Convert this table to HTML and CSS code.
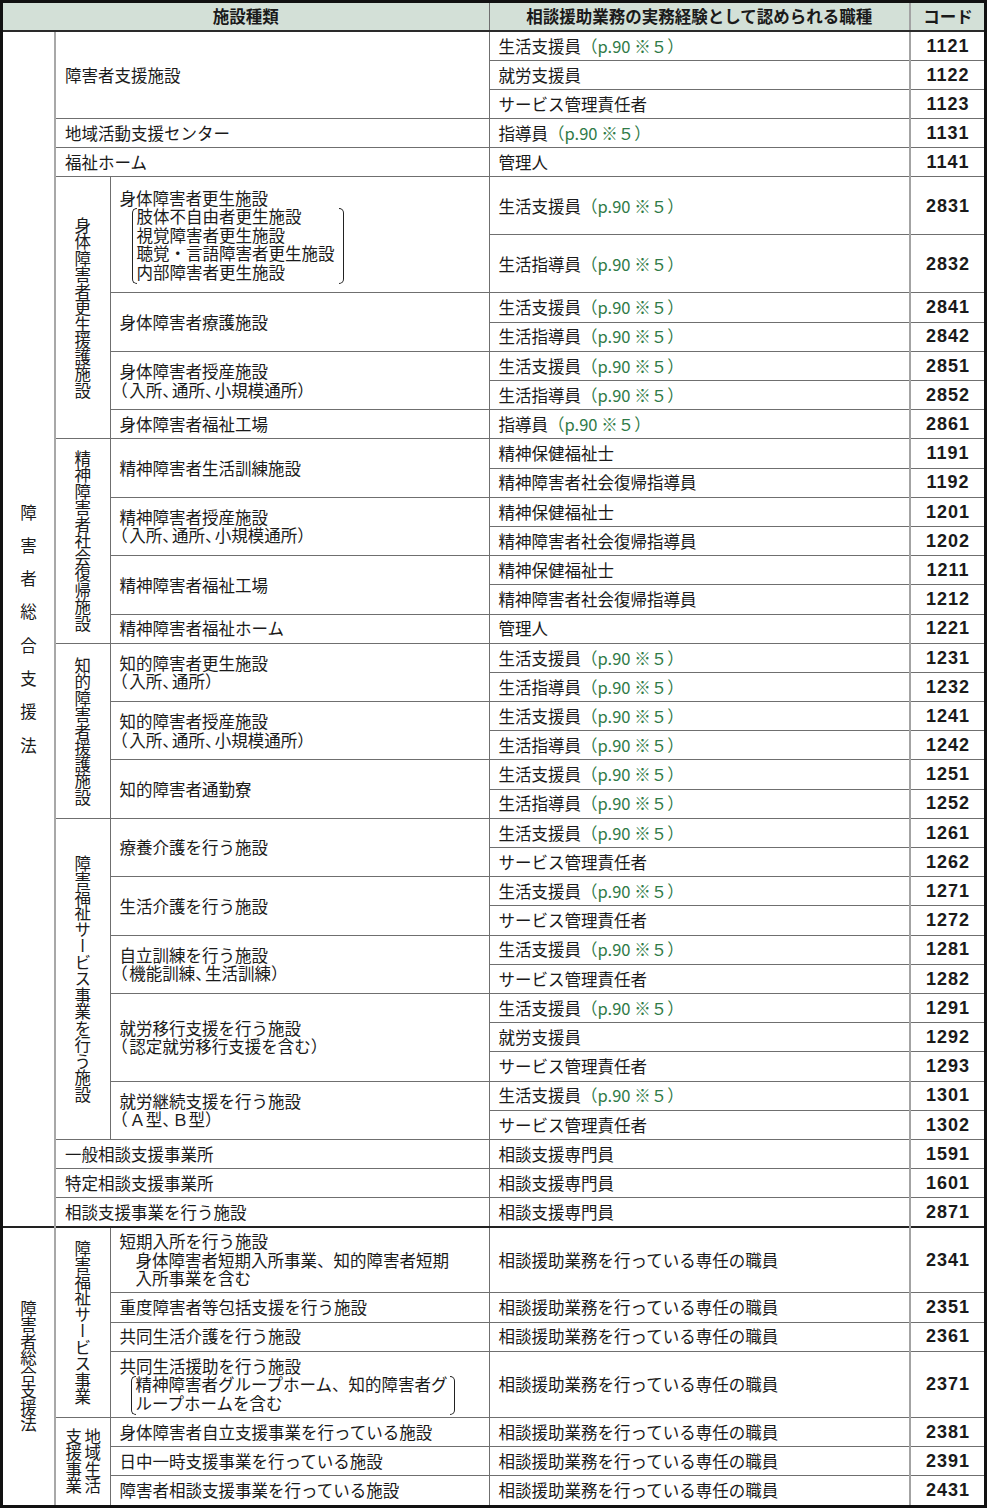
FILE: index.html
```html
<!DOCTYPE html>
<html lang="ja">
<head>
<meta charset="utf-8">
<title>相談援助業務の実務経験</title>
<link rel="stylesheet" href="styles.css">
</head>
<body>
<div class="frame">
<table>
<colgroup>
<col class="c1"><col class="c2"><col class="c3"><col class="c4"><col class="c5">
</colgroup>
<thead>
<tr class="head"><th colspan="3">施設種類</th><th>相談援助業務の実務経験として認められる職種</th><th class="code">コード</th></tr>
</thead>
<tbody>
<tr>
<td class="law" rowspan="39"><div class="vt spaced">障害者総合支援法</div></td>
<td class="fac" colspan="2" rowspan="3">障害者支援施設</td>
<td class="job">生活支援員<span class="note">（p.90 ※５）</span></td><td class="code">1121</td></tr>
<tr><td class="job">就労支援員</td><td class="code">1122</td></tr>
<tr><td class="job">サービス管理責任者</td><td class="code">1123</td></tr>
<tr><td class="fac" colspan="2">地域活動支援センター</td><td class="job">指導員<span class="note">（p.90 ※５）</span></td><td class="code">1131</td></tr>
<tr><td class="fac" colspan="2">福祉ホーム</td><td class="job">管理人</td><td class="code">1141</td></tr>

<tr class="t2">
<td class="grp" rowspan="7"><div class="vt">身体障害者更生援護施設</div></td>
<td class="fac" rowspan="2">身体障害者更生施設
<div class="sub"><div class="in">肢体不自由者更生施設<br>視覚障害者更生施設<br>聴覚・言語障害者更生施設<br>内部障害者更生施設</div></div></td>
<td class="job">生活支援員<span class="note">（p.90 ※５）</span></td><td class="code">2831</td></tr>
<tr class="t2"><td class="job">生活指導員<span class="note">（p.90 ※５）</span></td><td class="code">2832</td></tr>
<tr><td class="fac" rowspan="2">身体障害者療護施設</td><td class="job">生活支援員<span class="note">（p.90 ※５）</span></td><td class="code">2841</td></tr>
<tr><td class="job">生活指導員<span class="note">（p.90 ※５）</span></td><td class="code">2842</td></tr>
<tr><td class="fac" rowspan="2">身体障害者授産施設<br><span class="h">（</span>入所<span class="h">、</span>通所<span class="h">、</span>小規模通所<span class="h">）</span></td><td class="job">生活支援員<span class="note">（p.90 ※５）</span></td><td class="code">2851</td></tr>
<tr><td class="job">生活指導員<span class="note">（p.90 ※５）</span></td><td class="code">2852</td></tr>
<tr><td class="fac">身体障害者福祉工場</td><td class="job">指導員<span class="note">（p.90 ※５）</span></td><td class="code">2861</td></tr>

<tr>
<td class="grp" rowspan="7"><div class="vt">精神障害者社会復帰施設</div></td>
<td class="fac" rowspan="2">精神障害者生活訓練施設</td><td class="job">精神保健福祉士</td><td class="code">1191</td></tr>
<tr><td class="job">精神障害者社会復帰指導員</td><td class="code">1192</td></tr>
<tr><td class="fac" rowspan="2">精神障害者授産施設<br><span class="h">（</span>入所<span class="h">、</span>通所<span class="h">、</span>小規模通所<span class="h">）</span></td><td class="job">精神保健福祉士</td><td class="code">1201</td></tr>
<tr><td class="job">精神障害者社会復帰指導員</td><td class="code">1202</td></tr>
<tr><td class="fac" rowspan="2">精神障害者福祉工場</td><td class="job">精神保健福祉士</td><td class="code">1211</td></tr>
<tr><td class="job">精神障害者社会復帰指導員</td><td class="code">1212</td></tr>
<tr><td class="fac">精神障害者福祉ホーム</td><td class="job">管理人</td><td class="code">1221</td></tr>

<tr>
<td class="grp" rowspan="6"><div class="vt">知的障害者援護施設</div></td>
<td class="fac" rowspan="2">知的障害者更生施設<br><span class="h">（</span>入所<span class="h">、</span>通所<span class="h">）</span></td><td class="job">生活支援員<span class="note">（p.90 ※５）</span></td><td class="code">1231</td></tr>
<tr><td class="job">生活指導員<span class="note">（p.90 ※５）</span></td><td class="code">1232</td></tr>
<tr><td class="fac" rowspan="2">知的障害者授産施設<br><span class="h">（</span>入所<span class="h">、</span>通所<span class="h">、</span>小規模通所<span class="h">）</span></td><td class="job">生活支援員<span class="note">（p.90 ※５）</span></td><td class="code">1241</td></tr>
<tr><td class="job">生活指導員<span class="note">（p.90 ※５）</span></td><td class="code">1242</td></tr>
<tr><td class="fac" rowspan="2">知的障害者通勤寮</td><td class="job">生活支援員<span class="note">（p.90 ※５）</span></td><td class="code">1251</td></tr>
<tr><td class="job">生活指導員<span class="note">（p.90 ※５）</span></td><td class="code">1252</td></tr>

<tr>
<td class="grp" rowspan="11"><div class="vt">障害福祉サービス事業を行う施設</div></td>
<td class="fac" rowspan="2">療養介護を行う施設</td><td class="job">生活支援員<span class="note">（p.90 ※５）</span></td><td class="code">1261</td></tr>
<tr><td class="job">サービス管理責任者</td><td class="code">1262</td></tr>
<tr><td class="fac" rowspan="2">生活介護を行う施設</td><td class="job">生活支援員<span class="note">（p.90 ※５）</span></td><td class="code">1271</td></tr>
<tr><td class="job">サービス管理責任者</td><td class="code">1272</td></tr>
<tr><td class="fac" rowspan="2">自立訓練を行う施設<br><span class="h">（</span>機能訓練<span class="h">、</span>生活訓練<span class="h">）</span></td><td class="job">生活支援員<span class="note">（p.90 ※５）</span></td><td class="code">1281</td></tr>
<tr><td class="job">サービス管理責任者</td><td class="code">1282</td></tr>
<tr><td class="fac" rowspan="3">就労移行支援を行う施設<br><span class="h">（</span>認定就労移行支援を含む<span class="h">）</span></td><td class="job">生活支援員<span class="note">（p.90 ※５）</span></td><td class="code">1291</td></tr>
<tr><td class="job">就労支援員</td><td class="code">1292</td></tr>
<tr><td class="job">サービス管理責任者</td><td class="code">1293</td></tr>
<tr><td class="fac" rowspan="2">就労継続支援を行う施設<br><span class="h">（</span>Ａ型<span class="h">、</span>Ｂ型<span class="h">）</span></td><td class="job">生活支援員<span class="note">（p.90 ※５）</span></td><td class="code">1301</td></tr>
<tr><td class="job">サービス管理責任者</td><td class="code">1302</td></tr>
<tr><td class="fac" colspan="2">一般相談支援事業所</td><td class="job">相談支援専門員</td><td class="code">1591</td></tr>
<tr><td class="fac" colspan="2">特定相談支援事業所</td><td class="job">相談支援専門員</td><td class="code">1601</td></tr>
<tr><td class="fac" colspan="2">相談支援事業を行う施設</td><td class="job">相談支援専門員</td><td class="code">2871</td></tr>

<tr class="t3 sep">
<td class="law" rowspan="7"><div class="vt">障害者総合支援法</div></td>
<td class="grp" rowspan="4"><div class="vt">障害福祉サービス事業</div></td>
<td class="fac">短期入所を行う施設<div class="ind">身体障害者短期入所事業、知的障害者短期<br>入所事業を含む</div></td>
<td class="job">相談援助業務を行っている専任の職員</td><td class="code">2341</td></tr>
<tr><td class="fac">重度障害者等包括支援を行う施設</td><td class="job">相談援助業務を行っている専任の職員</td><td class="code">2351</td></tr>
<tr><td class="fac">共同生活介護を行う施設</td><td class="job">相談援助業務を行っている専任の職員</td><td class="code">2361</td></tr>
<tr class="t3"><td class="fac">共同生活援助を行う施設<div class="sub sub2"><div class="in">精神障害者グループホーム、知的障害者グ<br>ループホームを含む</div></div></td><td class="job">相談援助業務を行っている専任の職員</td><td class="code">2371</td></tr>
<tr>
<td class="grp" rowspan="3"><div class="vt two">地域生活<br>支援事業</div></td>
<td class="fac">身体障害者自立支援事業を行っている施設</td><td class="job">相談援助業務を行っている専任の職員</td><td class="code">2381</td></tr>
<tr><td class="fac">日中一時支援事業を行っている施設</td><td class="job">相談援助業務を行っている専任の職員</td><td class="code">2391</td></tr>
<tr><td class="fac">障害者相談支援事業を行っている施設</td><td class="job">相談援助業務を行っている専任の職員</td><td class="code">2431</td></tr>
</tbody>
</table>
</div>
</body>
</html>
```
FILE: styles.css
```css
html, body {
  margin: 0;
  padding: 0;
  background: #ffffff;
}

body {
  font-family: "Noto Sans CJK JP", "Noto Sans", sans-serif;
  font-size: 16.5px;
  color: #1a1a1a;
}

.frame {
  width: 981px;
  border: 3px solid #111111;
}

table {
  width: 981px;
  border-collapse: collapse;
  border-style: hidden;
  table-layout: fixed;
}

col.c1 { width: 52px; }
col.c2 { width: 55px; }
col.c3 { width: 379px; }
col.c4 { width: 421px; }
col.c5 { width: 74px; }

th, td {
  border: 1px solid #6f6f6f;
  padding: 0 0 0 9px;
  line-height: 18.5px;
  vertical-align: middle;
  text-align: left;
  font-weight: normal;
}

tr { height: 29.2px; }
tr.head { height: 28px; }
tr.t2 { height: 58px; }
tr.t3 { height: 66px; }

thead th {
  background: #d3e0d7;
  font-weight: bold;
  text-align: center;
  padding: 0;
  border-bottom: 2px solid #2a2a2a;
}

tr.sep > td { border-top: 2px solid #222222; }

td.law {
  padding: 0;
  border-right: 2px solid #a8a8a8;
}

td.grp {
  padding: 0;
}

.vt {
  writing-mode: vertical-rl;
  text-orientation: upright;
  width: max-content;
  margin: 0 auto;
  line-height: 18px;
}

.vt.spaced {
  letter-spacing: 16.8px;
  padding-top: 16.8px;
}

.vt.two {
  line-height: 19px;
}

.code {
  text-align: center;
  padding: 0 0 0 1px;
  font-family: "Liberation Sans", Arial, sans-serif;
  font-weight: bold;
  font-size: 18px;
  letter-spacing: 1px;
  border-left: 2px solid #a3a3a3;
}

thead th.code {
  font-family: "Noto Sans CJK JP", sans-serif;
  font-size: 16.5px;
  letter-spacing: 0;
}

.note {
  color: #2f7a47;
}

.h {
  font-feature-settings: "halt";
  letter-spacing: 1.5px;
}

.sub {
  display: flex;
  width: max-content;
  margin-left: 12px;
}

.sub .in {
  display: block;
}

.sub::before,
.sub::after {
  content: "";
  width: 4px;
  border: 1px solid #222222;
  margin: 1px 0 -3px;
}

.sub::before {
  border-right: none;
  border-radius: 5px 0 0 5px;
}

.sub::after {
  border-left: none;
  border-radius: 0 5px 5px 0;
  margin-left: 4px;
}

.sub2 {
  margin-left: 11px;
}

.sub2::after {
  margin-left: 2px;
}

.ind {
  padding-left: 16px;
}
```
